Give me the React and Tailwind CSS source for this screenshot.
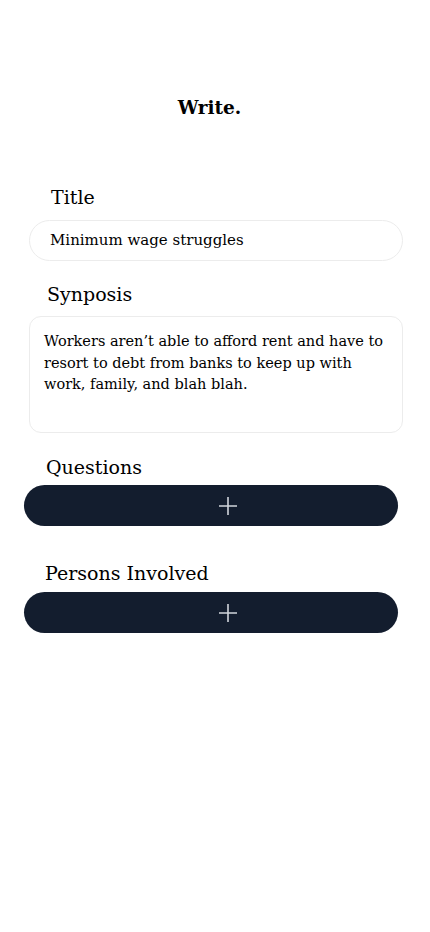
import React from "react";

function PlusIcon() {
  return (
    <svg width="20" height="20" viewBox="0 0 20 20" fill="none">
      <path d="M10 1v18M1 10h18" stroke="#d1d5db" strokeWidth="1.6" />
    </svg>
  );
}

export default function App() {
  const font = { fontFamily: '"DejaVu Serif", "Liberation Serif", serif' };
  return (
    <div className="w-[430px] h-[932px] bg-white text-black" style={font}>
      <div className="pt-[96px] flex justify-center">
        <h1 className="text-[18.5px] font-bold leading-[24px] ml-[-11px]">Write.</h1>
      </div>
      <div className="mt-[65px] pl-[51px] text-[19px] leading-[24px]">Title</div>
      <div className="mt-[11px] ml-[29px] w-[374px] h-[41px] rounded-full border border-[#ececec] flex items-center pl-[20px] text-[15px]">
        Minimum wage struggles
      </div>
      <div className="mt-[21px] pl-[47px] text-[19px] leading-[24px]">Synposis</div>
      <div className="mt-[10px] ml-[29px] w-[374px] h-[117px] rounded-[12px] border border-[#ececec] pl-[14px] pr-[4px] pt-[14px] text-[14.5px] leading-[21.5px] whitespace-nowrap">
        Workers aren’t able to afford rent and have to
        <br />
        resort to debt from banks to keep up with
        <br />
        work, family, and blah blah.
      </div>
      <div className="mt-[22px] pl-[46px] text-[19px] leading-[24px]">Questions</div>
      <button className="mt-[6px] ml-[24px] w-[374px] h-[41px] rounded-full bg-[#131d2e] flex items-center justify-center pl-[34px]">
        <PlusIcon />
      </button>
      <div className="mt-[35px] pl-[45px] text-[19px] leading-[24px]">Persons Involved</div>
      <button className="mt-[7px] ml-[24px] w-[374px] h-[41px] rounded-full bg-[#131d2e] flex items-center justify-center pl-[34px]">
        <PlusIcon />
      </button>
    </div>
  );
}
